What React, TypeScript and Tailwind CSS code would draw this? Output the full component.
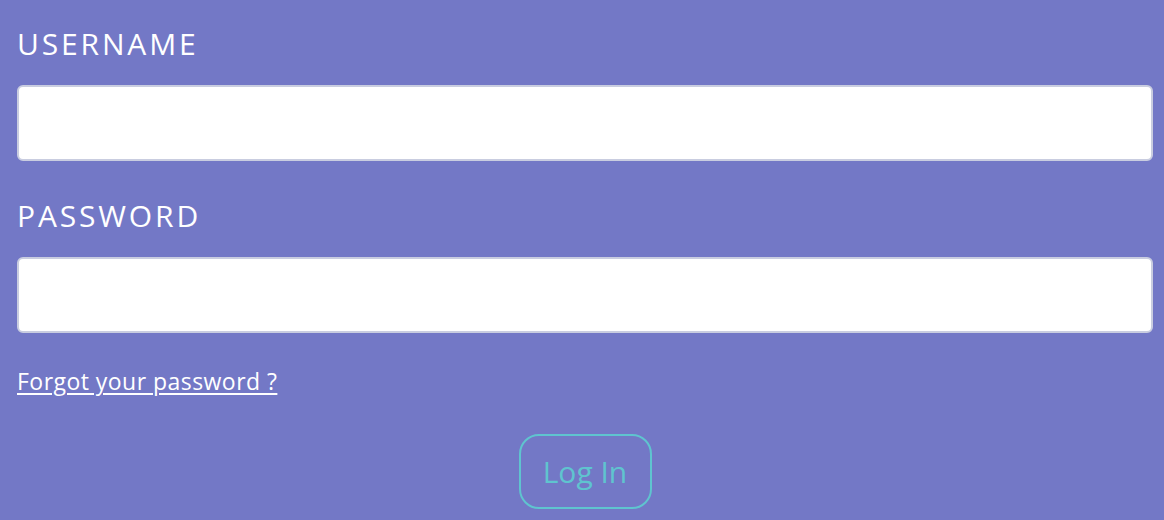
export default function App() {
  return (
    <main className="min-h-[520px] w-full bg-[#7378c6] pl-[17px] pr-[11px] pt-[26px] font-['Open_Sans',sans-serif] text-white">
      <form className="flex flex-col">
        <label className="mb-[23px] text-[30px] leading-[36px] tracking-[0.095em]">USERNAME</label>
        <input
          type="text"
          className="h-[76px] w-full rounded-[6px] border-2 border-[#c9cde0] bg-white px-4 text-2xl text-gray-800 outline-none"
        />

        <label className="mb-[23px] mt-[37px] text-[30px] leading-[36px] tracking-[0.095em]">PASSWORD</label>
        <input
          type="password"
          className="h-[76px] w-full rounded-[6px] border-2 border-[#c9cde0] bg-white px-4 text-2xl text-gray-800 outline-none"
        />

        <a href="#" className="mt-[34px] self-start text-[23px] leading-[28px] tracking-[0.02em] underline underline-offset-[3px]">
          Forgot your password ?
        </a>

        <div className="mt-[39px] flex justify-center">
          <button
            type="button"
            className="h-[75px] w-[133px] rounded-[20px] border-2 border-[#5fc4cf] text-[30px] text-[#5fc4cf]"
          >
            Log In
          </button>
        </div>
      </form>
    </main>
  );
}
